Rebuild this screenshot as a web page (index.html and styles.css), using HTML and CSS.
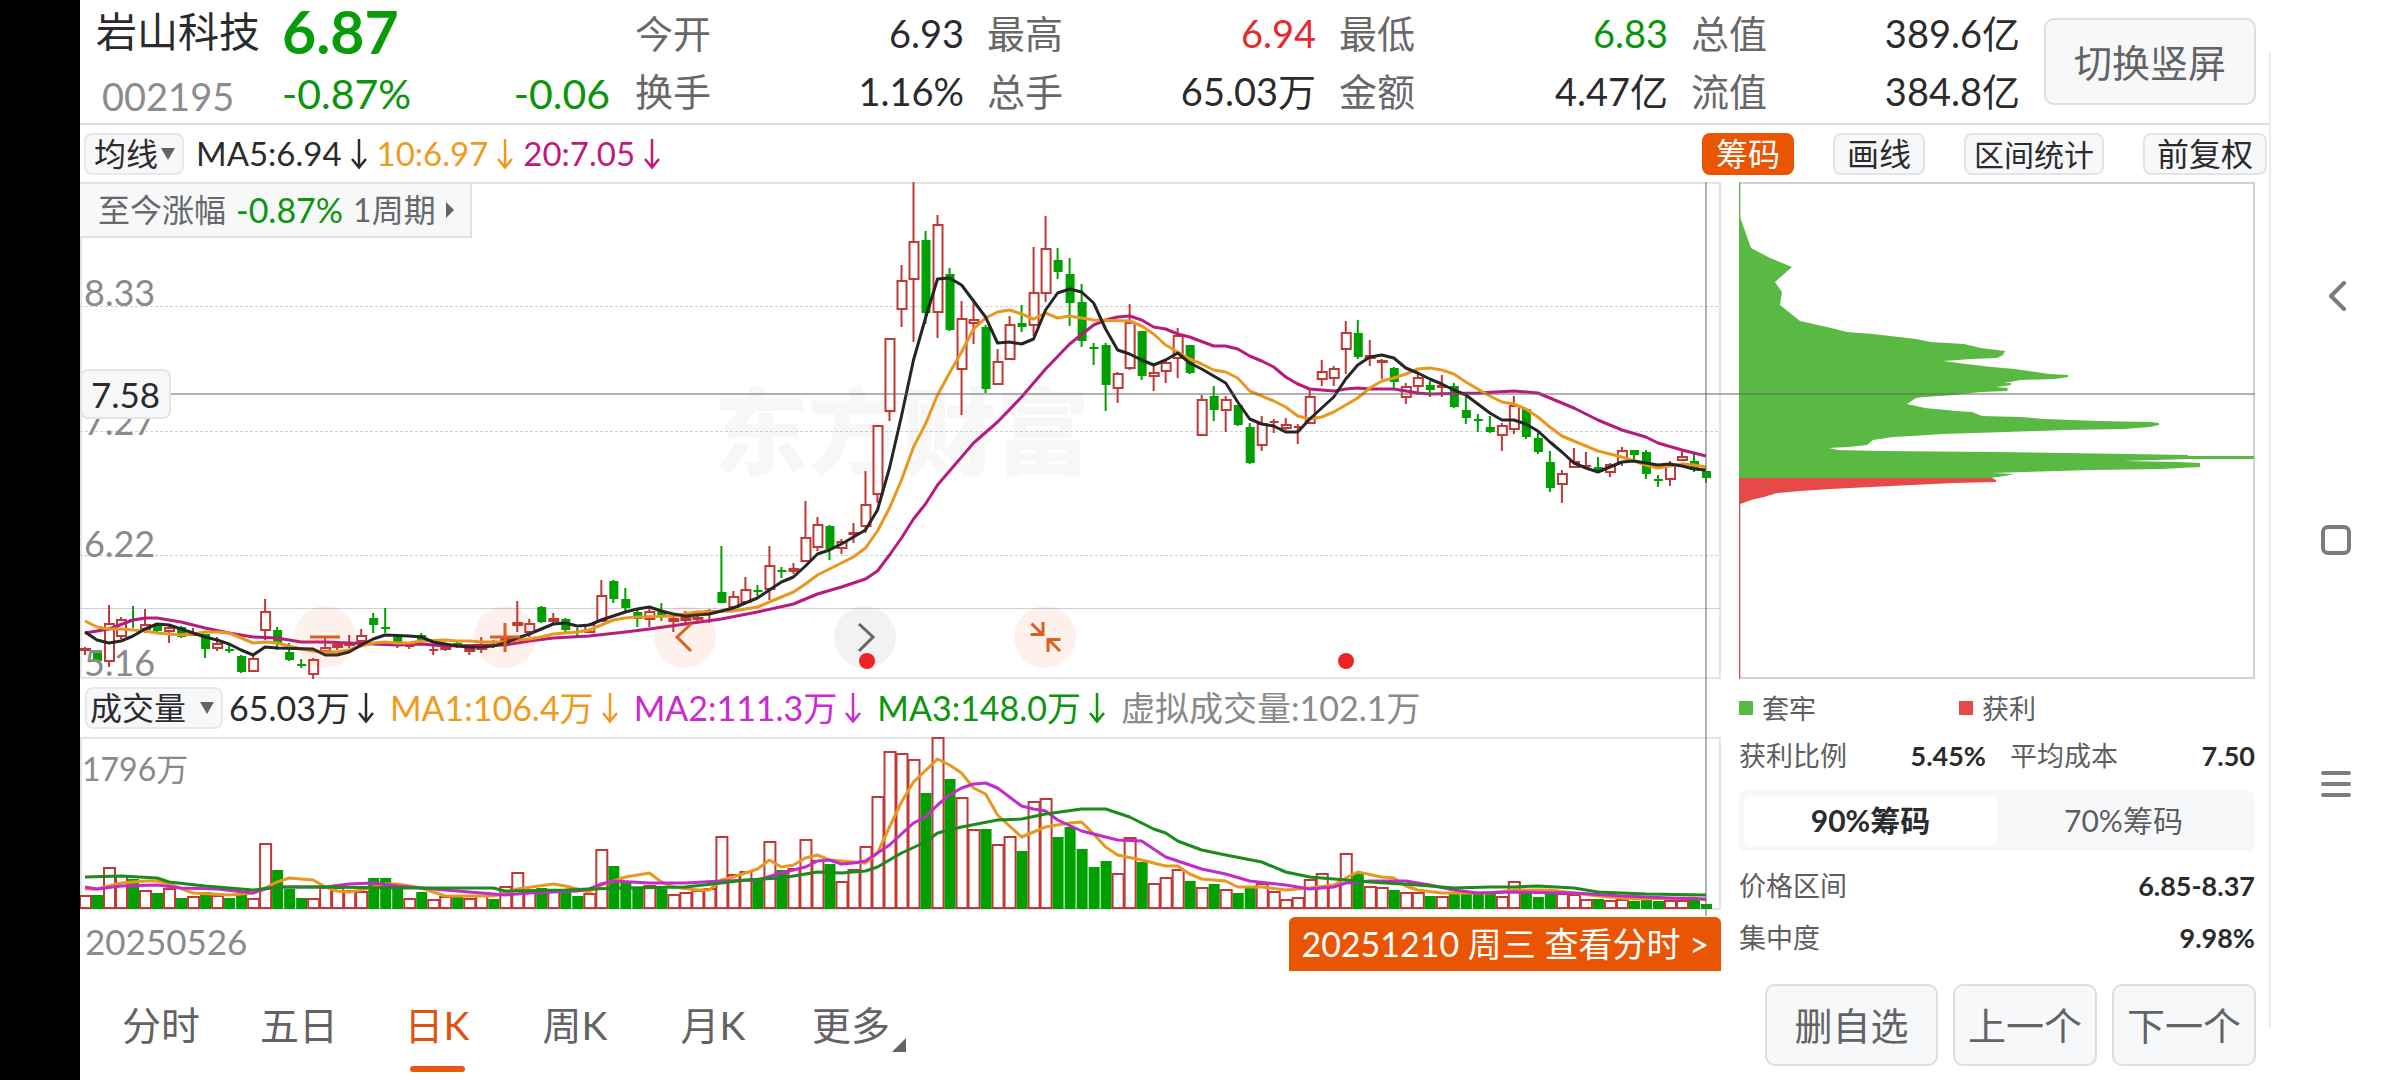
FILE: index.html
```html
<!DOCTYPE html>
<html lang="zh-CN">
<head>
<meta charset="utf-8">
<meta name="viewport" content="width=device-width, initial-scale=1">
<title>岩山科技 002195</title>
<link rel="stylesheet" href="styles.css">
</head>
<body>
<svg class="defs" aria-hidden="true">
  <symbol id="down" viewBox="0 0 16 32"><path d="M8 1V29M1 21L8 29.500L15 21" fill="none" stroke="currentColor" stroke-width="2.500"/></symbol>
</svg>
<div class="cutout"></div>
<main class="app">
  <header class="quote">
    <div class="stock">
      <h1 class="name">岩山科技</h1>
      <strong class="price">6.87</strong>
      <span class="code">002195</span>
      <span class="change"><span>-0.87%</span><span>-0.06</span></span>
    </div>
    <dl class="stats">
      <div><dt>今开</dt><dd>6.93</dd></div>
      <div><dt>最高</dt><dd class="up">6.94</dd></div>
      <div><dt>最低</dt><dd class="down">6.83</dd></div>
      <div><dt>总值</dt><dd>389.6亿</dd></div>
      <div><dt>换手</dt><dd>1.16%</dd></div>
      <div><dt>总手</dt><dd>65.03万</dd></div>
      <div><dt>金额</dt><dd>4.47亿</dd></div>
      <div><dt>流值</dt><dd>384.8亿</dd></div>
    </dl>
    <button class="btn rotate" type="button">切换竖屏</button>
  </header>

  <div class="toolbar">
    <span class="picker picker-ma"><select aria-label="主图指标"><option>均线</option></select></span>
    <div class="legend legend-ma">
      <span>MA5:6.94<svg class="arrow"><use href="#down"/></svg></span>
      <span class="orange">10:6.97<svg class="arrow"><use href="#down"/></svg></span>
      <span class="magenta">20:7.05<svg class="arrow"><use href="#down"/></svg></span>
    </div>
    <div class="tools">
      <button class="chip active" type="button">筹码</button>
      <button class="chip" type="button">画线</button>
      <button class="chip small" type="button">区间统计</button>
      <button class="chip" type="button">前复权</button>
    </div>
  </div>

  <div class="board">
    <div class="charts">
      <section class="kline">
        <div class="watermark">东方财富</div>
        <svg class="plot" id="kline" viewBox="80 182 1640 497" preserveAspectRatio="none"></svg>
        <span class="tick t1">8.33</span>
        <span class="tick t2">7.27</span>
        <span class="tick t3">6.22</span>
        <span class="tick t4">5.16</span>
        <button class="range" type="button">至今涨幅 <b>-0.87%</b> 1周期<i></i></button>
        <div class="controls">
          <button type="button" aria-label="缩小"><svg viewBox="0 0 62 62"><path d="M16 31H46"/></svg></button>
          <button type="button" aria-label="放大"><svg viewBox="0 0 62 62"><path d="M16 31H46M31 17V46"/></svg></button>
          <button type="button" aria-label="左移"><svg viewBox="0 0 62 62"><path d="M37 18L23 31L37 45"/></svg></button>
          <button type="button" class="grey" aria-label="右移"><svg viewBox="0 0 62 62"><path d="M25 18L39 31L25 45"/></svg></button>
          <button type="button" aria-label="收起"><svg viewBox="0 0 62 62"><path d="M17.500 17.500L28 28M29 16V28.500H16.500M46 45L35.500 34.500M34 46V33.500H46.500"/></svg></button>
        </div>
        <span class="event e1"></span>
        <span class="event e2"></span>
      </section>
      <div class="volbar">
        <span class="picker picker-vol"><select aria-label="副图指标"><option>成交量</option></select></span>
        <div class="legend legend-vol">
          <span>65.03万<svg class="arrow"><use href="#down"/></svg></span>
          <span class="orange">MA1:106.4万<svg class="arrow"><use href="#down"/></svg></span>
          <span class="violet">MA2:111.3万<svg class="arrow"><use href="#down"/></svg></span>
          <span class="green">MA3:148.0万<svg class="arrow"><use href="#down"/></svg></span>
          <span class="grey">虚拟成交量:102.1万</span>
        </div>
      </div>
      <section class="volume">
        <svg class="plot" id="volume" viewBox="80 737 1640 173" preserveAspectRatio="none"></svg>
        <span class="tick v1">1796万</span>
      </section>
      <div class="dates">
        <span class="start">20250526</span>
        <button class="detail" type="button">20251210 周三 查看分时 &gt;</button>
      </div>
      <div class="cross-v"></div>
    </div>

    <aside class="cost">
      <div class="distribution">
        <svg class="plot" viewBox="0 182 516 497" preserveAspectRatio="none">
          <path class="locked" d="M0 182H1V217L12 248 31 258 53 267 36 282 43 292 41 305 61 321 88 327 108 332 134 334 177 339 192 342 225 344 242 348 266 351 264 355 258 358 233 359 204 361 227 364 253 367 276 369 297 372 310 374 329 375V377L316 379 282 380 265 383H272V385L257 387 269 388 268 391 242 392 214 395 186 397 177 398 168 404 186 408 217 411 233 412 243 416 282 417 306 419 359 421 412 422 420 423V425L411 427 385 429 327 430 267 432 204 434 173 436 154 437 134 440 128 445 109 447 90 448 99 450 141 451 253 452 391 454 449 455V456H515V459H449L384 461 440 462 461 463V467L422 469 353 470 286 472 253 473 275 474 266 476 251 478H0Z"/>
          <path class="profit" d="M0 478H253L257 480V482L215 483 173 485 132 487 92 489 61 491 38 493 25 497 12 500 4 503 1 504V679H0Z"/>
        </svg>
      </div>
      <ul class="keys"><li class="k-locked">套牢</li><li class="k-profit">获利</li></ul>
      <dl class="pair">
        <div><dt>获利比例</dt><dd>5.45%</dd></div>
        <div><dt>平均成本</dt><dd>7.50</dd></div>
      </dl>
      <div class="segment">
        <button class="on" type="button">90%筹码</button>
        <button type="button">70%筹码</button>
      </div>
      <dl class="rows">
        <div><dt>价格区间</dt><dd>6.85-8.37</dd></div>
        <div><dt>集中度</dt><dd>9.98%</dd></div>
      </dl>
    </aside>
    <div class="cross-h"><span class="cross-price">7.58</span></div>
  </div>

  <footer class="bottom">
    <nav class="tabs">
      <a href="#fenshi">分时</a>
      <a href="#wuri">五日</a>
      <a href="#rik" class="current">日K</a>
      <a href="#zhouk">周K</a>
      <a href="#yuek">月K</a>
      <a href="#more" class="more">更多</a>
    </nav>
    <div class="actions">
      <button class="btn wide" type="button">删自选</button>
      <button class="btn" type="button">上一个</button>
      <button class="btn" type="button">下一个</button>
    </div>
  </footer>
</main>
<nav class="system">
  <button type="button" aria-label="返回"><svg viewBox="0 0 30 30"><path d="M23 2L10 15L23 28"/></svg></button>
  <button type="button" aria-label="主页"><svg viewBox="0 0 30 30"><rect x="2" y="2" width="26" height="26" rx="5"/></svg></button>
  <button type="button" aria-label="菜单"><svg viewBox="0 0 30 30"><path d="M2 4H28M2 15H28M2 26H28"/></svg></button>
</nav>
<script src="chart.js"></script>
</body>
</html>
```
FILE: styles.css
```css
* { box-sizing: border-box; }
body {
  margin: 0;
  min-height: 100vh;
  display: flex;
  background: #fff;
  color: #2b2b2d;
  font-family: Lato, "Noto Sans CJK SC", sans-serif;
  font-size: 38px;
  line-height: 1;
}
h1, dl, dd, ul { margin: 0; padding: 0; font-weight: 400; }
button, select { font: inherit; color: inherit; margin: 0; padding: 0; border: 0; background: none; }
button { white-space: nowrap; cursor: pointer; }
a { color: inherit; text-decoration: none; }
.defs { position: absolute; width: 0; height: 0; }

.cutout { flex: 0 0 80px; background: #000; }
.app { flex: 1; min-width: 0; position: relative; }
.app::after {
  content: "";
  position: absolute;
  top: 52px;
  right: 0;
  bottom: 52px;
  width: 2px;
  background: #ececee;
}
.system {
  flex: 0 0 129px;
  display: flex;
  flex-direction: column;
  align-items: center;
  justify-content: center;
  gap: 214px;
}
.system button, .system svg { display: block; width: 30px; height: 30px; }
.system path, .system rect { fill: none; stroke: #7c7c7c; stroke-width: 4; stroke-linecap: round; stroke-linejoin: round; }

.up { color: #e5292d; }
.down, .green { color: #0b950b; }
.orange { color: #f09a1c; }
.magenta { color: #c4177d; }
.violet { color: #cb2ad2; }
.grey { color: #8a8a8a; }

.btn {
  height: 82px;
  width: 144px;
  border: 2px solid #dcdee2;
  border-radius: 10px;
  background: #f7f8fa;
  color: #636365;
}
.btn.wide { width: 173px; }
.btn.rotate { width: 212px; height: 87px; }

/* Quote header */
.quote {
  display: flex;
  align-items: center;
  height: 125px;
  padding: 0 15px 0 16px;
  border-bottom: 2px solid #dcdcde;
}
.stock {
  flex: 0 0 514px;
  display: grid;
  grid-template-columns: 186px 1fr;
  grid-template-rows: 62px 60px;
  align-items: center;
}
.name { font-size: 41px; }
.price { font-size: 59px; color: #089d08; }
.code { color: #8c8c8e; padding: 6px 0 0 6px; }
.change { display: flex; justify-content: space-between; padding-top: 2px; font-size: 41px; color: #0b950b; }
.stats {
  flex: 1;
  display: grid;
  grid-template-columns: repeat(4, 1fr);
  grid-auto-rows: 58px;
  column-gap: 23px;
  margin: 0 24px 0 25px;
}
.stats div { display: flex; justify-content: space-between; align-items: center; }
.stats dt { color: #68686a; }

/* Toolbar */
.toolbar { display: flex; align-items: center; height: 57px; padding: 0 4px; }
.picker {
  position: relative;
  height: 42px;
  border: 2px solid #e6e8ec;
  border-radius: 8px;
  background: #f7f8fa;
  font-size: 32px;
}
.picker select { appearance: none; width: 100%; height: 38px; padding-left: 8px; line-height: 38px; }
.picker::after {
  content: "";
  position: absolute;
  top: 13px;
  right: 7px;
  border: 7px solid transparent;
  border-top: 12px solid #646464;
  border-bottom: 0;
  pointer-events: none;
}
.picker-ma { width: 100px; }
.picker-vol { width: 138px; }
.picker-vol select { padding-left: 3px; }
.legend { display: flex; white-space: nowrap; }
.legend span { display: flex; align-items: center; }
.legend-ma { font-size: 33px; margin-left: 12px; gap: 10px; }
.arrow { width: 16px; height: 32px; margin-left: 9px; }
.tools { display: flex; gap: 39px; margin-left: auto; }
.chip {
  height: 42px;
  padding: 0 12px;
  border: 2px solid #e2e4e8;
  border-radius: 8px;
  background: #f7f8fa;
  font-size: 32px;
}
.chip.small { font-size: 30px; padding: 0 8px; }
.chip.active { color: #fff; background: #ea5504; border-color: #ea5504; }

/* Chart board */
.board {
  position: relative;
  display: grid;
  grid-template-columns: minmax(0, 1fr) 516px;
  column-gap: 18px;
  padding-right: 16px;
}
.charts { position: relative; }
.kline { position: relative; height: 497px; border: 2px solid #e4e4e6; }
.volume { position: relative; height: 173px; border: 2px solid #e4e4e6; }
.plot { position: absolute; left: -2px; top: -2px; width: calc(100% + 4px); height: calc(100% + 4px); }
.watermark {
  position: absolute;
  left: 38.600%;
  top: 200px;
  font-size: 94px;
  font-weight: 900;
  color: #f7f7f7;
}
.tick { position: absolute; left: 2px; font-size: 36px; color: #8a8a8a; }
.t1 { top: 90px; }
.t2 { top: 219px; }
.t3 { top: 341px; }
.t4 { top: 460px; }
.v1 { top: 14px; left: 0; font-size: 32px; }
.range {
  position: absolute;
  top: 0;
  left: -2px;
  display: flex;
  align-items: center;
  gap: 10px;
  height: 54px;
  padding: 0 16px 0 18px;
  border: solid #e0e1e4;
  border-width: 0 2px 2px 0;
  background: #f7f8fa;
  color: #68686a;
  font-size: 32px;
}
.range b { font-weight: 400; font-size: 34px; color: #0b950b; }
.range i { border: 8px solid transparent; border-left: 8px solid #646464; border-right: 0; }
.controls { position: absolute; left: 212px; bottom: 9px; display: flex; gap: 118px; }
.controls button { width: 62px; height: 62px; border-radius: 50%; background: rgba(240, 90, 20, .09); color: #db5f1f; }
.controls .grey { background: rgba(90, 90, 90, .08); color: #666; }
.controls svg { display: block; }
.controls path { fill: none; stroke: currentColor; stroke-width: 3; }
.event { position: absolute; bottom: 8px; width: 16px; height: 16px; border-radius: 50%; background: #ee2424; transform: translateX(-50%); }
.e1 { left: 47.930%; }
.e2 { left: 77.200%; }
.volbar { display: flex; align-items: center; height: 58px; padding-left: 5px; }
.legend-vol { font-size: 34px; margin-left: 6px; gap: 16px; }
.legend-vol .arrow { margin-left: 8px; }
.dates { display: flex; justify-content: space-between; height: 62px; padding-top: 7px; font-size: 35px; }
.start { padding: 7px 5px; color: #8a8a8a; }
.detail { height: 54px; padding: 0 12px; border-radius: 6px 6px 0 0; background: #ea5504; color: #fff; font-size: 34px; }

.cross-v { position: absolute; top: 0; height: 734px; right: 14px; width: 2px; background: rgba(100, 100, 100, .5); }
.cross-h {
  position: absolute;
  left: 0;
  right: 16px;
  top: 187px;
  display: flex;
  align-items: center;
  height: 50px;
}
.cross-h::after { content: ""; flex: 1; height: 2px; background: rgba(100, 100, 100, .5); }
.cross-price {
  width: 91px;
  height: 50px;
  line-height: 46px;
  text-align: center;
  border: 2px solid #e2e4e8;
  border-radius: 8px;
  background: #f7f8fa;
  font-size: 35px;
}

/* Chart marks */
.plot path { vector-effect: non-scaling-stroke; }
.grid { stroke: #cfcfd1; stroke-width: 1; fill: none; }
.dotted { stroke-dasharray: 3 2; }
.rise { fill: #fff; stroke: #bf3936; stroke-width: 2; }
.rise-wick { fill: none; stroke: #bf3936; stroke-width: 2; }
.fall { fill: #00a000; }
.fall-wick { fill: none; stroke: #00a000; stroke-width: 2; }
.line { fill: none; stroke-width: 3; stroke-linejoin: round; }
.l-black { stroke: #262626; }
.l-orange { stroke: #e9981f; }
.l-magenta { stroke: #b71c7c; }
.l-violet { stroke: #c32cc8; }
.l-green { stroke: #1c8a1c; }
.locked { fill: #5ab943; }
.profit { fill: #e54a49; }

/* Cost distribution */
.cost { font-size: 27px; color: #5e5e60; }
.distribution { position: relative; height: 497px; border: 2px solid #d2d2d4; }
.keys { display: flex; height: 58px; align-items: center; list-style: none; }
.keys li { display: flex; align-items: center; gap: 9px; width: 220px; }
.keys li::before { content: ""; width: 14px; height: 14px; background: #5ab943; }
.keys .k-profit::before { background: #e54a49; }
.cost dd { font-weight: 700; color: #2b2b2d; }
.pair { display: grid; grid-template-columns: 247px 1fr; column-gap: 24px; height: 36px; }
.pair div, .rows div { display: flex; justify-content: space-between; align-items: center; }
.segment {
  display: flex;
  height: 60px;
  margin: 18px 0 8px;
  padding: 5px;
  border-radius: 6px;
  background: #f7f8fa;
  font-size: 30px;
}
.segment button { flex: 1; border-radius: 6px; padding-bottom: 2px; }
.segment .on { background: #fff; font-weight: 700; color: #2b2b2d; }
.rows div { height: 52px; }

/* Footer */
.bottom { display: flex; justify-content: space-between; height: 108px; padding: 12px 15px 0 12px; }
.tabs { display: flex; }
.tabs a {
  position: relative;
  width: 138px;
  height: 90px;
  line-height: 82px;
  text-align: center;
  font-size: 39px;
  color: #636365;
}
.tabs .current { color: #dd5410; }
.tabs .current::after {
  content: "";
  position: absolute;
  left: 42px;
  bottom: 2px;
  width: 55px;
  height: 6px;
  border-radius: 3px;
  background: #e35a10;
}
.tabs .more::after {
  content: "";
  position: absolute;
  right: 14px;
  bottom: 22px;
  border: 7px solid #646464;
  border-top-color: transparent;
  border-left-color: transparent;
}
.actions { display: flex; gap: 15px; }
```
FILE: chart.js
```js
// Each candle: direction, high, body top, body bottom, low (in plot units, y grows downwards).
const candles = `r647,648,651,655 g650,650,661,661 r605,623,662,667 r617,619,637,639 g606,619,621,628 r609,624,630,633
g623,624,631,632 r624,627,632,643 g626,627,637,638 r628,632,636,636 g634,634,649,658 r637,643,649,651 g645,649,651,653
g655,656,672,673 r655,658,672,672 r599,611,631,640 g627,630,643,650 g643,652,660,661 g659,664,666,668 r658,659,675,680
r638,647,652,653 r643,644,648,650 r635,643,646,648 r629,635,642,643 g613,618,625,633 g608,627,628,633 g635,637,644,648
r643,645,647,649 g633,635,642,643 r646,649,651,655 r643,646,650,651 g642,643,647,648 r646,648,652,655 r637,646,650,653
g640,644,645,648 r633,637,641,647 r601,622,626,632 r619,623,633,637 g606,607,622,623 r613,618,622,623 g618,619,630,632
g628,631,633,637 r623,624,633,633 r580,595,622,622 g580,581,599,603 g588,599,608,611 g608,612,619,627 r608,611,620,627
g603,611,617,621 r617,618,622,632 r611,617,621,625 r613,617,620,623 r609,610,613,623 g546,592,603,603 r591,596,608,609
r577,589,603,603 g585,590,591,596 r546,565,590,600 g567,570,571,578 r563,568,572,574 r501,537,562,562 r517,524,548,551
g525,526,549,560 r539,541,549,554 r523,532,535,543 r471,504,527,533 r425,425,495,503 r338,338,412,421 r265,280,310,327
r182,241,280,342 g231,240,313,324 r215,224,313,338 g268,274,330,331 r301,318,370,415 r299,319,324,344 g325,327,389,393
r349,361,385,385 r316,324,360,360 g305,323,327,332 r247,292,326,336 r216,248,294,302 g248,260,272,279 g258,274,303,326
g284,302,341,347 g343,347,348,365 g343,345,385,411 r372,373,389,403 r304,322,369,370 g331,331,376,380 r366,372,377,391
r360,362,372,383 r328,335,359,378 g345,345,373,374 r395,399,436,436 g386,396,410,421 r396,399,411,432 g405,405,425,426
g423,427,463,464 r416,423,446,451 r419,421,423,433 r418,424,429,430 r424,426,428,444 r389,396,424,424 r360,371,380,386
r366,368,379,386 r321,332,350,374 g320,333,357,359 r340,355,359,366 r359,360,363,379 g367,368,382,388 r383,386,398,404
r374,377,387,395 g381,385,390,397 r375,385,388,397 g383,386,407,408 g397,410,418,424 g414,419,420,432 g416,427,432,433
r423,425,436,451 r396,405,430,434 g409,409,437,439 g432,438,452,454 g451,462,488,492 r470,473,485,503 r448,461,468,468
r452,465,467,468 g457,467,470,472 r463,464,473,477 r447,450,463,466 g450,450,455,460 g450,452,474,479 g475,479,481,487
r461,465,480,486 r450,456,461,461 g454,461,470,472 g471,471,478,483`.split(/\s+/).map(c => [c[0], ...c.slice(1).split(",").map(Number)]);

// Top edge of each volume bar.
const volumes = [895,895,867,875,879,890,893,888,898,896,892,895,898,895,898,843,870,889,898,898,887,887,890,891,878,878,889,898,892,899,896,897,898,895,899,886,872,892,888,890,892,896,893,849,866,883,887,885,889,894,892,890,888,836,874,871,879,841,870,868,839,860,864,881,869,846,796,751,753,759,793,737,779,797,829,829,844,836,851,801,798,837,827,849,867,861,873,837,862,883,877,869,881,887,884,889,893,888,883,891,899,897,879,873,885,853,873,886,887,890,892,892,896,896,894,894,894,894,896,881,893,897,893,893,894,899,899,900,899,901,900,901,900,900,900,904];

// Bars whose close rose against the previous day although the candle itself fell, and the reverse.
const volumeDirection = { 53: "r", 70: "g" };

// Moving averages: index:y pairs, joined by straight segments.
const lines = {
  kline: {
    magenta: "0:633 2:629 4:620 5:618 6:618 8:622 10:628 12:633 14:637 16:638 18:642 20:642 24:644 26:645 28:644 30:646 35:645 37:641 39:638 42:636 45:632 47:629 50:624 53:619 56:612 59:604 61:594 63:587 64:583 65:579 66:571 67:555 68:538 69:519 70:504 71:485 74:443 76:422 78:397 80:369 82:344 84:325 85:320 86:317 87:316 88:320 89:327 90:329 91:334 92:337 94:346 95:346 96:349 97:356 98:361 99:367 100:377 101:384 102:389 104:391 105:389 106:388 107:389 109:389 110:391 111:393 112:394 116:393 119:391 121:393 123:403 124:408 126:420 128:430 130:437 131:443 133:450 135:456",
    orange: "0:621 1:627 2:629 3:629 4:630 5:631 6:633 7:634 8:635 9:634 10:632 11:632 12:633 13:638 14:643 15:642 16:643 17:646 18:649 19:651 20:652 21:652 22:650 23:646 24:643 25:642 26:643 27:643 28:641 30:640 31:641 32:641 33:642 35:642 36:640 37:639 38:637 39:634 40:633 41:632 42:630 43:625 44:620 45:618 46:617 49:616 50:614 51:612 54:611 55:609 56:607 57:602 58:597 59:592 60:584 61:575 62:569 63:563 64:557 65:548 66:531 67:508 68:480 69:447 70:424 71:395 72:373 73:352 74:329 75:318 76:312 77:310 78:314 79:319 80:313 81:318 82:316 83:318 84:320 87:321 88:326 89:334 90:345 91:352 92:359 93:364 94:370 95:372 96:378 97:391 98:396 99:401 100:407 101:416 102:419 103:417 104:412 105:405 106:398 107:388 108:381 109:378 110:374 111:369 112:368 113:370 114:374 115:382 116:389 117:396 118:402 119:404 120:409 121:417 122:427 123:436 124:441 125:446 126:451 127:454 128:457 129:461 130:465 131:468 132:466 133:464 134:465 135:467",
    black: "0:632 1:640 2:643 3:641 4:636 5:629 6:624 7:625 8:629 9:633 10:637 11:640 12:644 13:650 14:655 15:647 16:648 19:649 20:655 21:655 22:652 23:645 24:639 25:635 27:636 28:637 29:642 30:644 31:646 32:647 33:647 34:646 35:643 36:638 37:634 38:629 39:624 40:623 41:626 42:625 43:620 44:616 45:612 46:609 47:607 48:611 49:614 50:616 51:615 52:614 53:611 54:608 55:603 56:598 57:590 58:582 59:577 60:566 61:554 62:550 63:544 64:537 65:530 66:510 67:468 68:416 69:360 70:318 71:279 72:278 73:285 74:301 75:317 76:343 77:342 78:344 79:339 80:310 81:293 82:289 83:292 84:303 85:329 86:350 87:354 88:360 89:365 90:360 91:353 92:363 93:369 94:376 95:383 96:402 97:419 98:424 99:426 100:432 101:432 102:419 103:408 104:397 105:379 106:365 107:357 108:355 109:358 110:368 111:373 112:379 113:384 114:390 115:395 116:404 117:413 118:420 119:420 120:424 121:431 122:442 123:452 124:463 125:468 126:472 127:467 128:462 129:461 130:463 131:465 132:464 133:466 134:469 135:470"
  },
  volume: {
    orange: "0:889 1:889 2:886 3:883 4:882 5:881 6:881 7:884 9:893 12:895 14:893 15:888 16:882 17:878 19:880 20:887 21:891 22:892 23:890 24:887 25:884 26:884 28:888 30:896 34:896 35:893 36:889 39:884 40:886 42:892 43:885 45:877 47:873 48:882 49:887 51:890 52:890 53:880 54:877 56:869 57:860 58:867 59:865 60:858 61:855 62:860 64:862 65:863 66:853 67:827 68:802 69:782 71:759 72:765 73:773 74:788 75:794 76:815 78:837 79:832 80:827 82:823 83:822 84:834 85:847 86:855 88:860 90:866 91:866 92:874 93:879 95:881 96:887 98:887 100:890 102:888 104:885 105:878 106:872 108:877 109:878 110:886 111:890 113:893 117:893 119:890 122:890 124:893 126:896 129:899 134:898 135:900",
    violet: "0:887 1:889 3:886 6:885 8:888 11:889 14:893 15:889 16:887 20:887 22:884 24:883 26:886 28:888 32:892 35:895 37:893 41:891 42:889 43:884 44:881 47:883 50:883 53:881 56:880 58:873 60:867 61:861 62:860 63:864 64:863 65:861 66:853 67:845 69:823 70:817 71:805 72:795 73:788 74:784 75:783 76:788 78:806 79:809 80:811 81:820 83:831 86:840 88:841 90:857 91:861 93:869 95:874 97:881 100:885 102:889 104:887 105:883 107:881 110:881 112:885 114:890 116:893 119:892 124:893 128:896 132:898 135:899",
    green: "0:877 3:876 6:878 7:882 10:886 14:890 16:887 20:887 26:888 34:888 35:891 40:890 42:889 45:888 50:887 53:883 55:880 58:878 61:872 63:873 65:871 66:867 68:853 70:842 71:833 73:827 76:820 78:819 80:814 83:809 85:809 87:817 89:829 90:833 91:841 93:850 95:855 98:862 100:872 102:877 104:879 107:882 111:885 114:888 117:887 119:887 121:886 124:888 126:892 130:894 135:895"
  }
};

const x = i => 85 + 12 * i;
const path = (cls, d) => `<path class="${cls}" d="${d}"/>`;
const drawLines = set => Object.entries(set).map(([name, pts]) =>
  path("line l-" + name, "M" + pts.split(" ").map(p => { const [i, y] = p.split(":"); return x(+i) + " " + y; }).join("L"))).join("");

let k = path("grid dotted", "M80 306.5H1720M80 431.5H1720M80 555.5H1720") + path("grid", "M80 608.5H1720");
candles.forEach(([dir, high, top, bottom, low], i) => {
  const c = x(i);
  if (dir === "r") {
    k += path("rise-wick", `M${c} ${high}V${top}M${c} ${bottom}V${low}`);
    const h = Math.max(bottom - top, 2);
    k += path("rise", `M${c - 4} ${top + 1}H${c + 5}V${top + h - 1}H${c - 4}Z`);
  } else {
    k += path("fall-wick", `M${c} ${high}V${low}`) + path("fall", `M${c - 4} ${top}H${c + 5}V${Math.max(bottom, top + 2)}H${c - 4}Z`);
  }
});
document.getElementById("kline").innerHTML = k + drawLines(lines.kline);

let v = "";
volumes.forEach((top, i) => {
  const c = x(i);
  v += (volumeDirection[i] || candles[i][0]) === "r"
    ? path("rise", `M${c - 5} ${top + 1}H${c + 6}V908H${c - 5}Z`)
    : path("fall", `M${c - 5} ${top}H${c + 6}V909H${c - 5}Z`);
});
document.getElementById("volume").innerHTML = v + drawLines(lines.volume);
```
